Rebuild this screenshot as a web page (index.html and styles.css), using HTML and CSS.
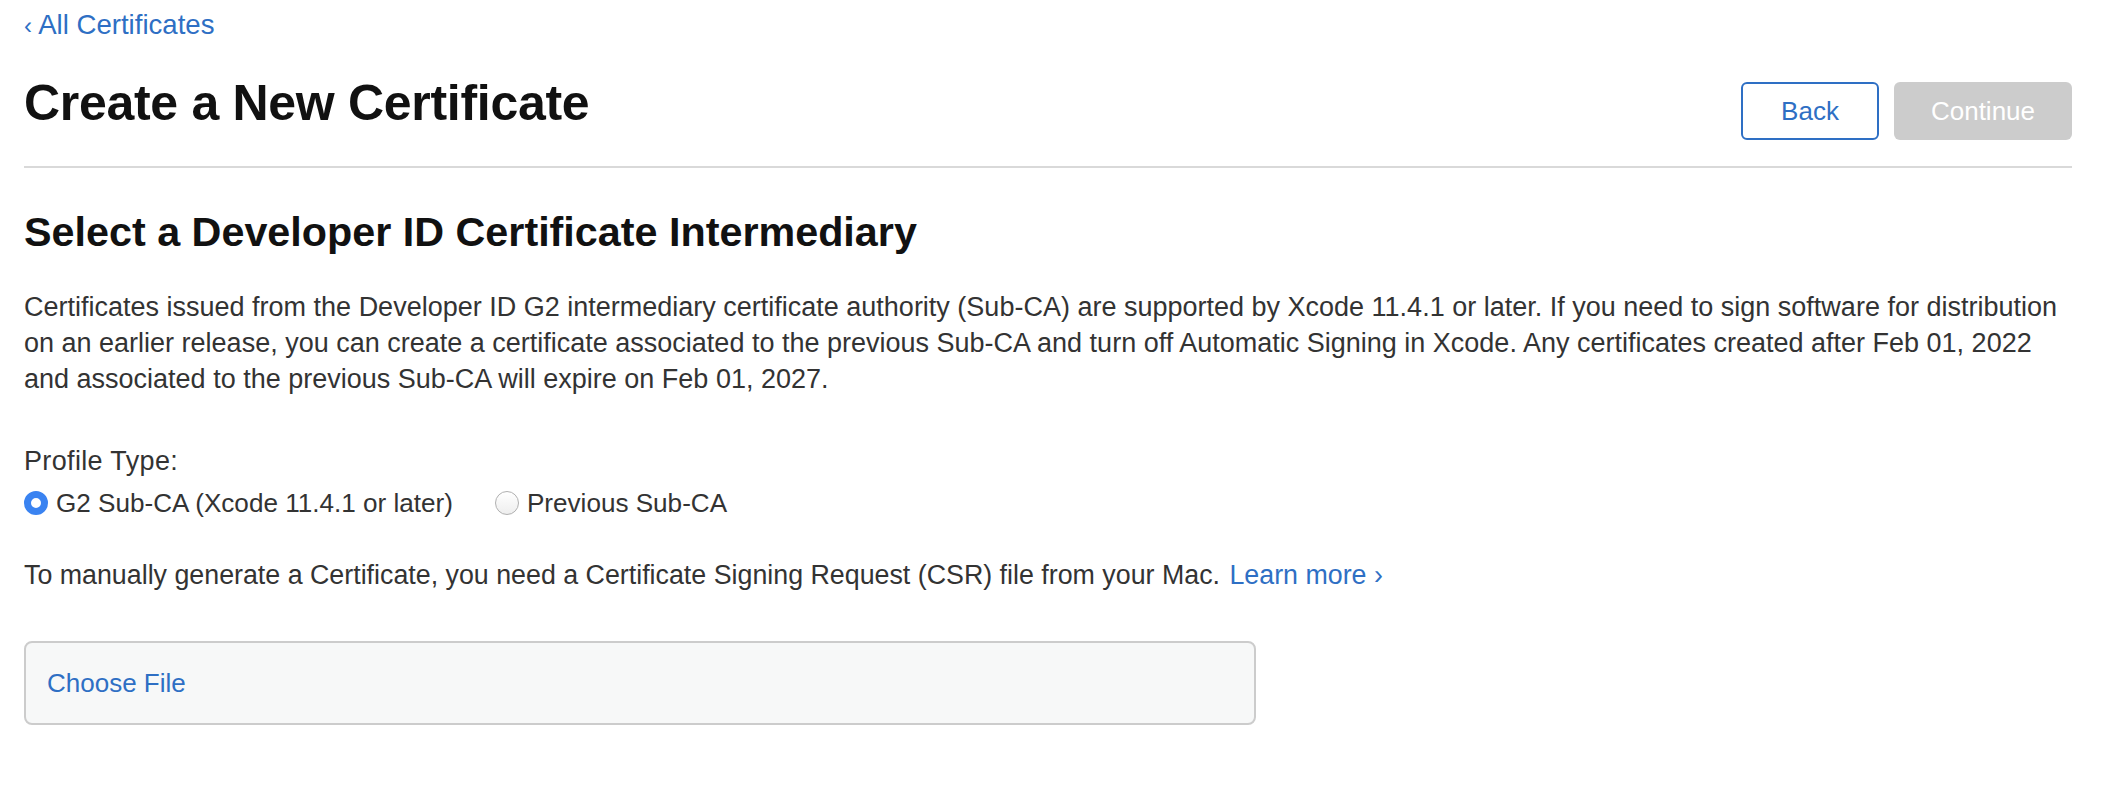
FILE: index.html
```html
<!DOCTYPE html>
<html lang="en">
<head>
<meta charset="utf-8">
<title>Create a New Certificate</title>
<link rel="stylesheet" href="styles.css">
</head>
<body>
<div class="page">
  <a class="back-link" href="#"><span class="chev">‹</span> All Certificates</a>

  <div class="title-row">
    <h1 class="title">Create a New Certificate</h1>
    <div class="actions">
      <button class="btn btn-outline" type="button">Back</button>
      <button class="btn btn-disabled" type="button" disabled>Continue</button>
    </div>
  </div>

  <div class="divider"></div>

  <section class="content">
    <h2 class="subtitle">Select a Developer ID Certificate Intermediary</h2>
    <p class="desc">Certificates issued from the Developer ID G2 intermediary certificate authority (Sub-CA) are supported by Xcode 11.4.1 or later. If you need to sign software for distribution<br>on an earlier release, you can create a certificate associated to the previous Sub-CA and turn off Automatic Signing in Xcode. Any certificates created after Feb 01, 2022<br>and associated to the previous Sub-CA will expire on Feb 01, 2027.</p>

    <div class="field-label">Profile Type:</div>
    <div class="radio-row">
      <label class="radio">
        <span class="radio-dot checked"></span>
        <span class="radio-text">G2 Sub-CA (Xcode 11.4.1 or later)</span>
      </label>
      <label class="radio">
        <span class="radio-dot"></span>
        <span class="radio-text">Previous Sub-CA</span>
      </label>
    </div>

    <p class="csr-note">To manually generate a Certificate, you need a Certificate Signing Request (CSR) file from your Mac. <a class="learn" href="#">Learn more ›</a></p>

    <div class="file-box">
      <span class="choose">Choose File</span>
    </div>
  </section>
</div>
</body>
</html>
```

FILE: styles.css
```css
html, body {
  margin: 0;
  padding: 0;
  background: #ffffff;
}

body {
  font-family: "Liberation Sans", Arial, sans-serif;
  color: #333333;
}

.page {
  padding: 10px 32px 40px 24px;
}

.back-link {
  display: block;
  font-size: 27.6px;
  line-height: 30px;
  color: #2e6fc4;
  text-decoration: none;
}

.back-link .chev {
  font-size: 24px;
}

.title-row {
  display: flex;
  justify-content: space-between;
  align-items: flex-start;
  margin-top: 32px;
}

.title {
  margin: 0;
  font-size: 50px;
  line-height: 60px;
  font-weight: 700;
  color: #111111;
  letter-spacing: -0.3px;
}

.actions {
  display: flex;
  gap: 15px;
  margin-top: 9px;
}

.btn {
  height: 58px;
  font-family: "Liberation Sans", Arial, sans-serif;
  font-size: 26px;
  border-radius: 6px;
  padding: 0;
}

.btn-outline {
  width: 138px;
  background: #ffffff;
  border: 2px solid #2e6fc4;
  color: #2e6fc4;
}

.btn-disabled {
  width: 178px;
  background: #cccccc;
  border: none;
  color: #ffffff;
}

.divider {
  margin-top: 26px;
  height: 2px;
  background: #d9d9d9;
}

.subtitle {
  margin: 40px 0 0;
  font-size: 41.3px;
  line-height: 48px;
  font-weight: 700;
  color: #111111;
}

.desc {
  margin: 33px 0 0;
  font-size: 27px;
  line-height: 36px;
  white-space: nowrap;
}

.field-label {
  margin-top: 46px;
  font-size: 27px;
  line-height: 36px;
  letter-spacing: 0.35px;
  color: #333333;
}

.radio-row {
  display: flex;
  align-items: center;
  gap: 42px;
  margin-top: 6px;
  height: 36px;
}

.radio {
  display: flex;
  align-items: center;
  gap: 8px;
  font-size: 26.1px;
}

.radio-dot {
  box-sizing: border-box;
  width: 24px;
  height: 24px;
  border-radius: 50%;
  border: 1px solid #b0b0b0;
  background: linear-gradient(#ffffff, #eeeeee);
}

.radio-dot.checked {
  border: 7px solid #3a83f1;
  background: #ffffff;
}

.csr-note {
  margin: 36px 0 0;
  font-size: 26.8px;
  line-height: 36px;
}

.learn {
  color: #2e6fc4;
  text-decoration: none;
  margin-left: 2px;
}

.file-box {
  box-sizing: border-box;
  margin-top: 48px;
  width: 1232px;
  height: 84px;
  display: flex;
  align-items: center;
  padding-left: 21px;
  background: #f7f8f8;
  border: 2px solid #cccccc;
  border-radius: 8px;
}

.choose {
  font-size: 26px;
  color: #2e6fc4;
}
```
